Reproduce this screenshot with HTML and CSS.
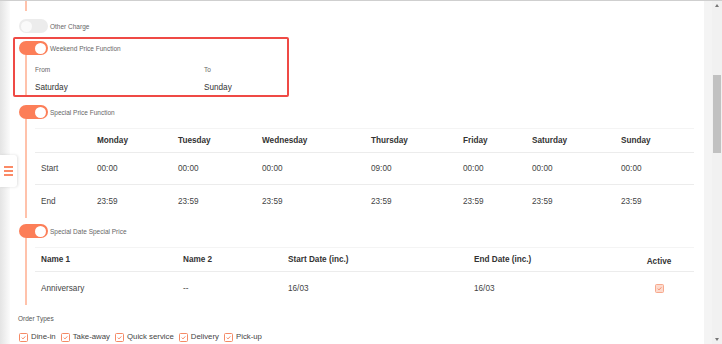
FILE: index.html
```html
<!doctype html>
<html>

<head>
    <meta charset="utf-8">
    <title>Price Settings</title>
    <meta name="viewport" content="width=device-width,initial-scale=1">
    <link rel="stylesheet" href="styles.css">
</head>

<body>
    <div class="frame">
        <div class="edge"></div>

        <main class="main">
            <div class="stub"></div>

            <section class="section">
                <div class="switch-row">
                    <span class="switch"></span>
                    <span class="switch-label">Other Charge</span>
                </div>
            </section>

            <section class="section section--highlight">
                <div class="switch-row">
                    <span class="switch is-on"></span>
                    <span class="switch-label">Weekend Price Function</span>
                </div>
                <div class="section-body weekend">
                    <div class="field">
                        <div class="field-label">From</div>
                        <div class="field-value">Saturday</div>
                    </div>
                    <div class="field">
                        <div class="field-label">To</div>
                        <div class="field-value">Sunday</div>
                    </div>
                </div>
            </section>

            <section class="section">
                <div class="switch-row">
                    <span class="switch is-on"></span>
                    <span class="switch-label">Special Price Function</span>
                </div>
                <div class="section-body">
                    <div class="grid-table days">
                        <div class="row head">
                            <div class="cell"></div>
                            <div class="cell">Monday</div>
                            <div class="cell">Tuesday</div>
                            <div class="cell">Wednesday</div>
                            <div class="cell">Thursday</div>
                            <div class="cell">Friday</div>
                            <div class="cell">Saturday</div>
                            <div class="cell">Sunday</div>
                        </div>
                        <div class="row">
                            <div class="cell">Start</div>
                            <div class="cell">00:00</div>
                            <div class="cell">00:00</div>
                            <div class="cell">00:00</div>
                            <div class="cell">09:00</div>
                            <div class="cell">00:00</div>
                            <div class="cell">00:00</div>
                            <div class="cell">00:00</div>
                        </div>
                        <div class="row">
                            <div class="cell">End</div>
                            <div class="cell">23:59</div>
                            <div class="cell">23:59</div>
                            <div class="cell">23:59</div>
                            <div class="cell">23:59</div>
                            <div class="cell">23:59</div>
                            <div class="cell">23:59</div>
                            <div class="cell">23:59</div>
                        </div>
                    </div>
                </div>
            </section>

            <section class="section section--last">
                <div class="switch-row">
                    <span class="switch is-on"></span>
                    <span class="switch-label">Special Date Special Price</span>
                </div>
                <div class="section-body">
                    <div class="grid-table dates">
                        <div class="row head">
                            <div class="cell">Name 1</div>
                            <div class="cell">Name 2</div>
                            <div class="cell">Start Date (inc.)</div>
                            <div class="cell">End Date (inc.)</div>
                            <div class="cell center active-head">Active</div>
                        </div>
                        <div class="row">
                            <div class="cell">Anniversary</div>
                            <div class="cell">--</div>
                            <div class="cell">16/03</div>
                            <div class="cell">16/03</div>
                            <div class="cell center">
                                <span class="checkbox is-disabled">
                                    <svg viewBox="0 0 10 10"><path d="M2.5 5.2l1.8 1.8 3.3-3.6" /></svg>
                                </span>
                            </div>
                        </div>
                    </div>
                </div>
            </section>

            <div class="order-types">
                <div class="order-title">Order Types</div>
                <div class="order-list">
                    <label class="order-item">
                        <span class="checkbox"><svg viewBox="0 0 10 10"><path d="M2.5 5.2l1.8 1.8 3.3-3.6" /></svg></span>
                        Dine-in
                    </label>
                    <label class="order-item">
                        <span class="checkbox"><svg viewBox="0 0 10 10"><path d="M2.5 5.2l1.8 1.8 3.3-3.6" /></svg></span>
                        Take-away
                    </label>
                    <label class="order-item">
                        <span class="checkbox"><svg viewBox="0 0 10 10"><path d="M2.5 5.2l1.8 1.8 3.3-3.6" /></svg></span>
                        Quick service
                    </label>
                    <label class="order-item">
                        <span class="checkbox"><svg viewBox="0 0 10 10"><path d="M2.5 5.2l1.8 1.8 3.3-3.6" /></svg></span>
                        Delivery
                    </label>
                    <label class="order-item">
                        <span class="checkbox"><svg viewBox="0 0 10 10"><path d="M2.5 5.2l1.8 1.8 3.3-3.6" /></svg></span>
                        Pick-up
                    </label>
                </div>
            </div>
        </main>

        <div class="gutter"></div>

        <div class="scrollbar">
            <span class="arrow arrow--up"></span>
            <div class="track"><div class="thumb"></div></div>
            <span class="arrow arrow--down"></span>
        </div>

        <!-- side drawer handle -->
        <div class="drawer-tab">
            <span></span>
            <span></span>
            <span></span>
        </div>
    </div>
</body>

</html>
```

FILE: styles.css
```css
body {
    margin: 0;
    font-family: "Liberation Sans", Arial, sans-serif;
    background: #fff;
    color: #444;
    overflow: hidden;
}

.frame {
    position: relative;
    display: flex;
    height: 343px;
    border-top: 1px solid #cfcfcf;
    overflow: hidden;
}

.edge {
    width: 10px;
    flex-shrink: 0;
    background: linear-gradient(to right, #e4e4e4, #fbfbfb);
}

.main {
    flex: 1;
    padding: 0 10px 0 3px;
    background: #fff;
}

.stub {
    width: 2px;
    height: 10px;
    margin-left: 12px;
    background: #ffc2ab;
}

/* Sections with a switch and a timeline body */
.section {
    margin-top: 8px;
    padding-left: 6px;
}

.section--highlight {
    margin-top: 4px;
    padding: 2px 0 0 4px;
    border: 2px solid #ef4a45;
    border-radius: 2px;
    width: 268px;
}

.section--last {
    margin-top: 6px;
}

.switch-row {
    display: flex;
    align-items: center;
    height: 14px;
}

.switch {
    position: relative;
    width: 29px;
    height: 14px;
    border-radius: 7px;
    background: #ececec;
    flex-shrink: 0;
}

.switch::after {
    content: "";
    position: absolute;
    top: 1.5px;
    left: 2px;
    width: 11px;
    height: 11px;
    border-radius: 50%;
    background: #fafafa;
}

.switch.is-on {
    background: #fc7e58;
}

.switch.is-on::after {
    left: auto;
    right: 2px;
    background: #fff;
}

.switch-label {
    margin-left: 2px;
    font-size: 6.5px;
    color: #666;
}

.section-body {
    margin-left: 6px;
    border-left: 2px solid #ffc2ab;
    padding: 9px 0 1px 8px;
}

.weekend {
    display: grid;
    grid-template-columns: 169px 1fr;
    padding: 11px 0 2px 8px;
}

.field-label {
    font-size: 6.5px;
    line-height: 8px;
    color: #666;
}

.field-value {
    margin-top: 9px;
    font-size: 8.2px;
    line-height: 10px;
    color: #333;
}

/* Tables */
.grid-table {
    width: 659px;
    font-size: 8.2px;
}

.row {
    display: grid;
    height: 32px;
    align-items: center;
    border-bottom: 1px solid #ececec;
    box-sizing: border-box;
}

.row:last-child {
    border-bottom: none;
}

.row.head {
    height: 25px;
    border-top: 1px solid #f4f4f4;
    font-weight: bold;
    color: #333;
}

.days .row {
    grid-template-columns: 56px 81px 84px 109px 92px 69px 89px 79px;
}

.dates .row {
    grid-template-columns: 142px 105px 186px 156px 70px;
}

.cell {
    padding-left: 6px;
    white-space: nowrap;
}

.cell.center {
    padding-left: 0;
    text-align: center;
    display: flex;
    justify-content: center;
}

.active-head {
    padding-top: 3px;
}

/* Checkboxes */
.checkbox {
    display: inline-flex;
    width: 9px;
    height: 9px;
    box-sizing: border-box;
    border: 1px solid #f58a66;
    border-radius: 1.5px;
    background: #fff;
    flex-shrink: 0;
}

.checkbox svg {
    width: 100%;
    height: 100%;
    fill: none;
    stroke: #f47a52;
    stroke-width: 1.3;
}

.checkbox.is-disabled {
    background: #fddacd;
    border-color: #f7a98d;
}

.checkbox.is-disabled svg {
    stroke: #f2825f;
}

.order-types {
    padding-left: 5px;
    margin-top: 10px;
}

.order-title {
    font-size: 6.5px;
    line-height: 8px;
    color: #555;
}

.order-list {
    display: flex;
    margin-top: 9px;
    margin-left: 1px;
}

.order-item {
    display: flex;
    align-items: center;
    gap: 3px;
    margin-right: 5px;
    font-size: 7.8px;
    line-height: 10px;
    color: #444;
}

/* Right side chrome */
.gutter {
    width: 8px;
    flex-shrink: 0;
    background: #f4f4f4;
}

.scrollbar {
    width: 10px;
    flex-shrink: 0;
    background: #f1f1f1;
    display: flex;
    flex-direction: column;
    align-items: center;
}

.track {
    flex: 1;
    width: 100%;
}

.thumb {
    margin: 65px 1px 0 1px;
    height: 78px;
    background: #c1c1c1;
}

.arrow {
    width: 0;
    height: 0;
    margin: 3px 0;
    border-left: 2.5px solid transparent;
    border-right: 2.5px solid transparent;
}

.arrow--up {
    border-bottom: 3px solid #777;
}

.arrow--down {
    border-top: 3px solid #777;
}

.drawer-tab {
    position: absolute;
    left: 0;
    top: 154px;
    width: 17px;
    height: 32px;
    background: #fff;
    border-radius: 0 3px 3px 0;
    box-shadow: 1px 0 3px rgba(0, 0, 0, 0.12);
    display: flex;
    flex-direction: column;
    justify-content: center;
    align-items: flex-start;
    gap: 2px;
}

.drawer-tab span {
    width: 9px;
    height: 2px;
    margin-left: 4px;
    background: #fb8a66;
}
```
